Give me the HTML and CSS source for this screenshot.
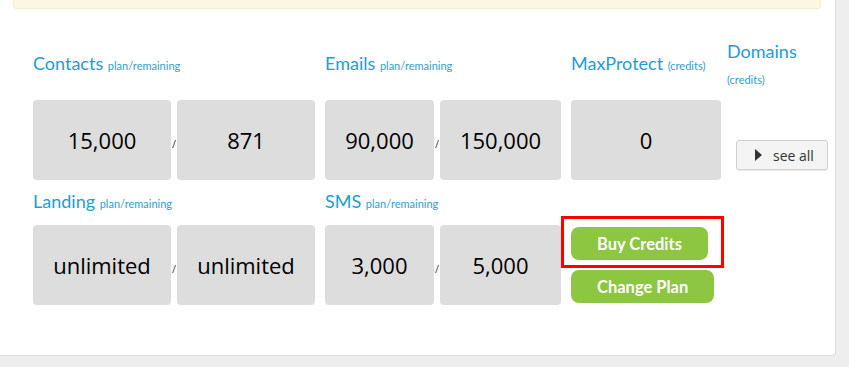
FILE: index.html
```html
<!DOCTYPE html>
<html lang="en">
<head>
    <meta charset="UTF-8">
    <meta name="viewport" content="width=device-width, initial-scale=1.0">
    <title>Account Plan</title>
    <link rel="stylesheet" href="styles.css">
</head>
<body>
    <div class="card">
        <div class="alert"></div>

        <div class="plan-grid">
            <!-- row 1: labels -->
            <div class="label label-contacts">Contacts <small>plan/remaining</small></div>
            <div class="label label-emails">Emails <small>plan/remaining</small></div>
            <div class="label label-protect">MaxProtect <small>(credits)</small></div>
            <div class="label label-domains">Domains <small>(credits)</small></div>

            <!-- row 1: values -->
            <div class="value c1">15,000</div>
            <div class="slash c2">/</div>
            <div class="value c3">871</div>
            <div class="value c5">90,000</div>
            <div class="slash c6">/</div>
            <div class="value c7">150,000</div>
            <div class="value c9">0</div>
            <div class="see-all-cell">
                <button class="btn-see-all">
                    <svg width="7" height="12" viewBox="0 0 7 12"><polygon points="0,0 7,6 0,12" fill="#333"/></svg>
                    see all
                </button>
            </div>

            <!-- row 2: labels -->
            <div class="label label-landing">Landing <small>plan/remaining</small></div>
            <div class="label label-sms">SMS <small>plan/remaining</small></div>

            <!-- row 2: values -->
            <div class="value row-4 c1">unlimited</div>
            <div class="slash row-4 c2">/</div>
            <div class="value row-4 c3">unlimited</div>
            <div class="value row-4 c5">3,000</div>
            <div class="slash row-4 c6">/</div>
            <div class="value row-4 c7">5,000</div>

            <div class="actions">
                <span class="highlight">
                    <button class="btn-green">Buy Credits</button>
                </span>
                <button class="btn-green">Change Plan</button>
            </div>
        </div>
    </div>
</body>
</html>
```

FILE: styles.css
```css
body {
    margin: 0;
    background-color: #eeeeee;
    font-family: Lato, "Open Sans", sans-serif;
}
.card {
    width: 835px;
    height: 355px;
    background-color: #fff;
    border-right: 1px solid #dcdcdc;
    border-bottom: 1px solid #dcdcdc;
    border-bottom-right-radius: 4px;
}
.alert {
    height: 8px;
    margin: 0 14px 0 13px;
    background-color: #fcf7e3;
    border: 1px solid #f6ecc8;
    border-top: none;
    border-radius: 0 0 4px 4px;
}
.plan-grid {
    display: grid;
    grid-template-columns: 138px 6px 138px 10px 109px 6px 121px 10px 150px 6px 101px;
    grid-template-rows: 60px 80px 45px 80px;
    margin: 31px 0 0 33px;
}
.label {
    align-self: center;
    font-size: 18px;
    line-height: 25px;
    color: #1d9dd6;
    white-space: nowrap;
}
.label small {
    font-size: 11px;
    color: #2a9fd6;
}
.label-contacts { grid-row: 1; grid-column: 1 / 4; margin-bottom: 12px; }
.label-emails { grid-row: 1; grid-column: 5 / 8; margin-bottom: 12px; }
.label-protect { grid-row: 1; grid-column: 9 / 11; margin-bottom: 12px; }
.label-domains { grid-row: 1; grid-column: 11; margin-bottom: 10px; white-space: normal; line-height: 26px; }
.label-landing { grid-row: 3; grid-column: 1 / 4; }
.label-sms { grid-row: 3; grid-column: 5 / 8; }

.value {
    grid-row: 2;
    display: flex;
    align-items: center;
    justify-content: center;
    background-color: #dddddd;
    border-radius: 4px;
    font-family: "Open Sans", sans-serif;
    font-size: 22px;
    color: #000;
}
.slash {
    grid-row: 2;
    align-self: center;
    padding-top: 6px;
    font-family: "Open Sans", sans-serif;
    font-size: 11px;
    color: #444;
    text-align: center;
}
.row-4 { grid-row: 4; }
.c1 { grid-column: 1; }
.c2 { grid-column: 2; }
.c3 { grid-column: 3; }
.c5 { grid-column: 5; }
.c6 { grid-column: 6; }
.c7 { grid-column: 7; }
.c9 { grid-column: 9; }

.see-all-cell {
    grid-row: 2;
    grid-column: 11;
    display: flex;
    justify-content: flex-end;
    padding-top: 40px;
}
.btn-see-all {
    display: flex;
    align-items: center;
    gap: 11px;
    height: 30px;
    width: 92px;
    padding: 0 0 0 18px;
    background-color: #f4f4f4;
    border: 1px solid #d0d0d0;
    border-radius: 3px;
    box-shadow: 0 1px 1px rgba(0, 0, 0, 0.08);
    font-family: "Open Sans", sans-serif;
    font-size: 14px;
    color: #333;
}

.actions {
    grid-row: 3 / 5;
    grid-column: 9 / 12;
    display: flex;
    flex-direction: column;
    align-items: flex-start;
    gap: 10px;
    padding-top: 47px;
}
.highlight {
    position: relative;
    display: block;
}
.highlight::after {
    content: "";
    position: absolute;
    left: -10px;
    top: -11px;
    right: -16px;
    bottom: -8px;
    border: 3px solid #ff0000;
}
.btn-green {
    display: block;
    height: 33px;
    padding: 0 26px;
    background-color: #8dc641;
    border: none;
    border-radius: 8px;
    font-family: Lato, sans-serif;
    font-weight: bold;
    font-size: 16.5px;
    color: #fff;
}
```
